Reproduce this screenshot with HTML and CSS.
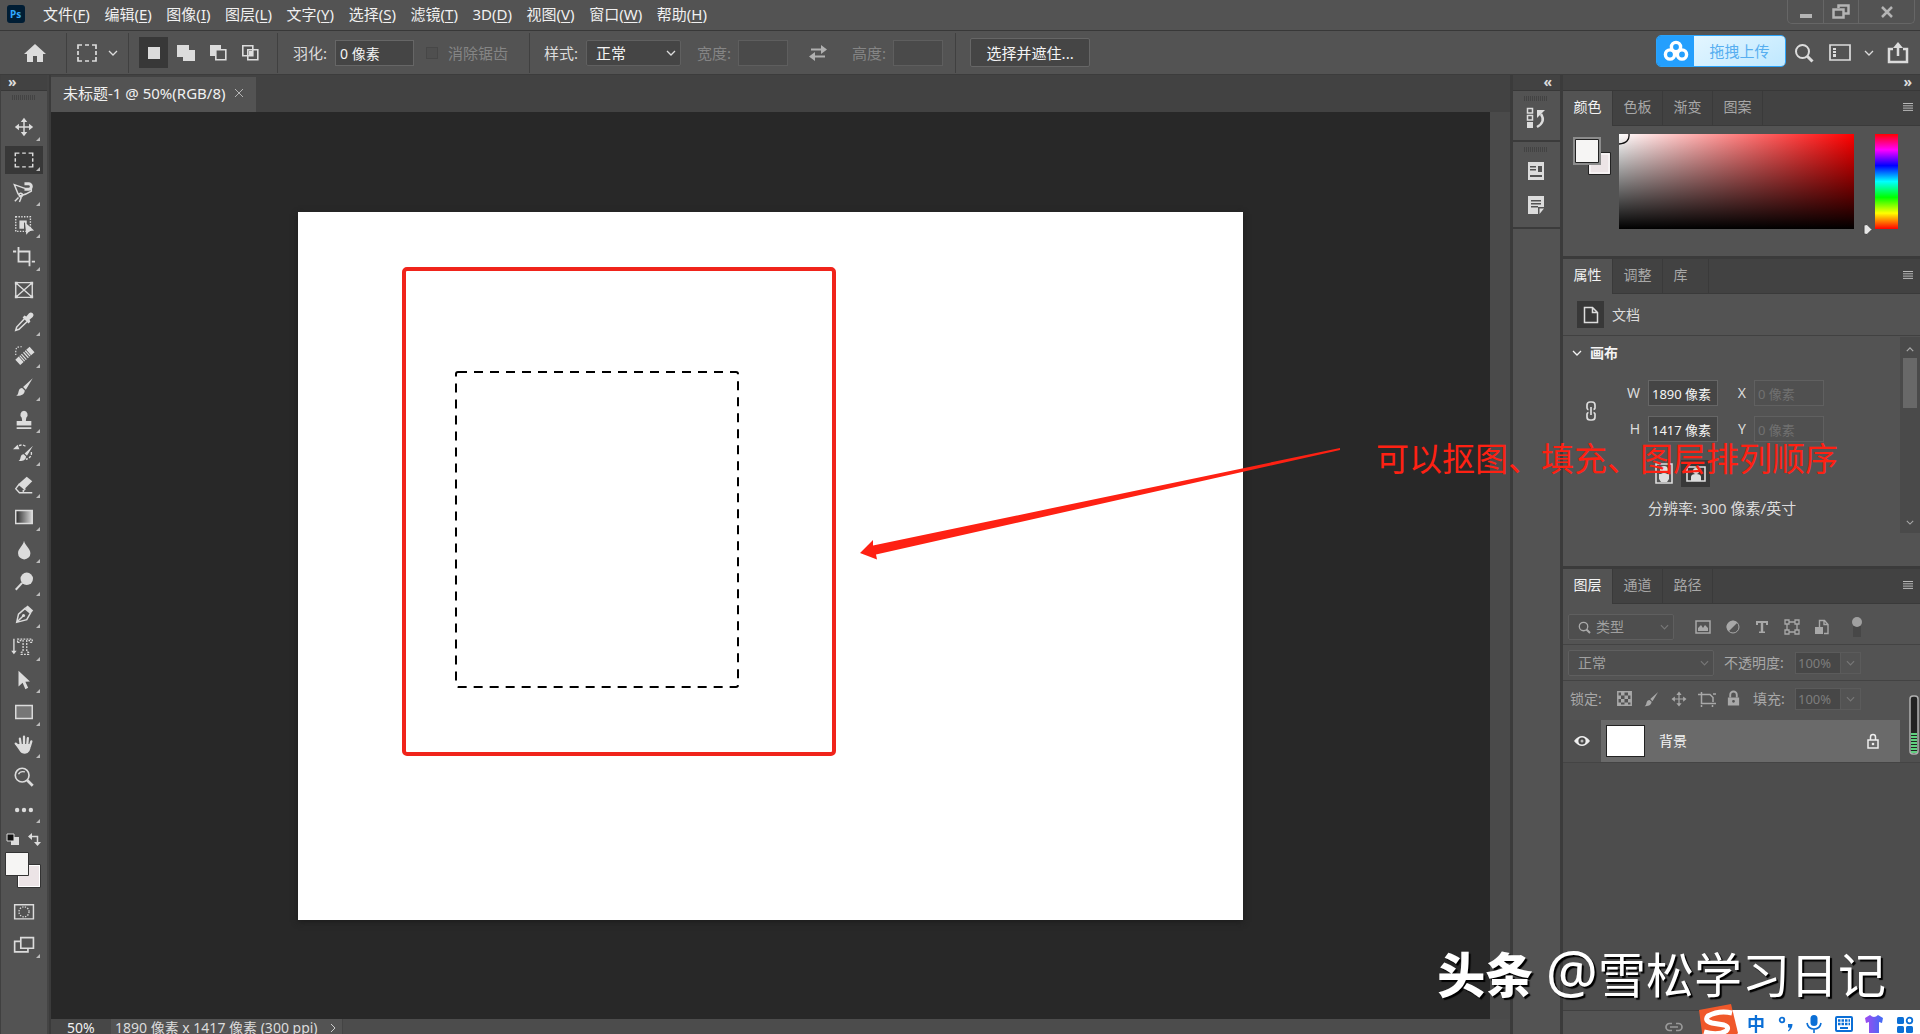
FILE: index.html
```
<!DOCTYPE html>
<html lang="zh-CN">
<head>
<meta charset="utf-8">
<title>未标题-1 @ 50%(RGB/8)</title>
<link rel="stylesheet" href="styles.css">
</head>
<body>
<svg class="defs" aria-hidden="true">
  <defs>
    <linearGradient id="ramp"><stop offset="0" stop-color="#2a2a2a"/><stop offset="1" stop-color="#d8d8d8"/></linearGradient>
    <linearGradient id="shirt"><stop offset="0" stop-color="#a04bf0"/><stop offset="1" stop-color="#3f6df5"/></linearGradient>
    <symbol id="chev" viewBox="0 0 10 6"><path d="M1 1l4 4 4-4" fill="none" stroke="currentColor" stroke-width="1.3"/></symbol>
    <symbol id="search" viewBox="0 0 20 20"><g fill="none" stroke="currentColor"><circle cx="8.500" cy="8.500" r="6.500" stroke-width="2"/><path d="M13 13l5.500 5.500" stroke-width="3"/></g></symbol>
    <symbol id="move" viewBox="0 0 24 24"><path d="M12 5v14M5 12h14" stroke="currentColor" stroke-width="1.600"/><path d="M12 2l3.500 4.500h-7zM12 22l3.500-4.500h-7zM2 12l4.500-3.500v7zM22 12l-4.500-3.500v7z" fill="currentColor"/></symbol>
    <symbol id="brush" viewBox="0 0 24 24"><path d="M21.500 2.500L11 12l3 3zM10 13.200l2.800 2.600c0 4-4 6.200-9.300 5.700 2.500-1.500 2-3 2.800-5.500.7-2 2.200-3 3.700-2.800z" fill="currentColor"/></symbol>
    <symbol id="lock" viewBox="0 0 16 18"><path d="M4.500 8V5a3.500 3.500 0 0 1 7 0v3" fill="none" stroke="currentColor" stroke-width="2"/><path fill-rule="evenodd" d="M2 8h12v8.500H2zM8 10.500a1.500 1.500 0 1 0 0 3 1.500 1.500 0 0 0 0-3z" fill="currentColor"/></symbol>
    <symbol id="menu" viewBox="0 0 10 8"><path d="M0 .5h10M0 2.800h10M0 5.100h10M0 7.400h10" stroke="currentColor"/></symbol>
    <symbol id="chain" viewBox="0 0 12 20"><g fill="none" stroke="currentColor" stroke-width="1.700"><path d="M3.500 8.500H3A2 2 0 0 1 2 7V4a3 3 0 0 1 3-3h2a3 3 0 0 1 3 3v3a2 2 0 0 1-1.500 1.500M3.500 11.500A2 2 0 0 0 2 13v3a3 3 0 0 0 3 3h2a3 3 0 0 0 3-3v-3a2 2 0 0 0-1.500-1.500M6 6v8"/></g></symbol>
  </defs>
</svg>

<div class="app">
  <header class="menubar">
    <svg class="logo" viewBox="0 0 18 18"><rect width="18" height="18" rx="3" fill="#001d34"/><text x="3" y="13" class="logo-text">Ps</text></svg>
    <nav class="menus">
      <a href="#">文件(<u>F</u>)</a><a href="#">编辑(<u>E</u>)</a><a href="#">图像(<u>I</u>)</a><a href="#">图层(<u>L</u>)</a><a href="#">文字(<u>Y</u>)</a><a href="#">选择(<u>S</u>)</a><a href="#">滤镜(<u>T</u>)</a><a href="#">3D(<u>D</u>)</a><a href="#">视图(<u>V</u>)</a><a href="#">窗口(<u>W</u>)</a><a href="#">帮助(<u>H</u>)</a>
    </nav>
    <div class="wincontrols">
      <button aria-label="最小化"><svg width="14" height="14" viewBox="0 0 14 14"><path d="M1 9h12v4H1z" fill="#b4b4b4"/></svg></button>
      <button aria-label="还原"><svg width="18" height="16" viewBox="0 0 18 16"><g fill="none" stroke="#b4b4b4" stroke-width="2.500"><path d="M6.500 4V1.500h10v8H12"/><path d="M1.500 5.500h10v8h-10z"/></g></svg></button>
      <button class="wide" aria-label="关闭"><svg width="14" height="12" viewBox="0 0 14 12"><path d="M2 1l10 10M12 1L2 11" stroke="#b4b4b4" stroke-width="2.500"/></svg></button>
    </div>
  </header>

  <section class="options" aria-label="工具选项">
    <div class="group home">
      <button class="plain" aria-label="主页"><svg width="22" height="20" viewBox="0 0 22 20"><path d="M11 1l11 10h-3v8h-6v-6H9v6H3v-8H0z" fill="#dcdcdc"/></svg></button>
    </div>
    <div class="group preset">
      <button class="plain" aria-label="矩形选框工具"><svg width="20" height="18" viewBox="0 0 20 18"><path d="M1 5V1h4M8 1h4M15 1h4v4M19 7v4M19 13v4h-4M12 17H8M5 17H1v-4M1 11V7" fill="none" stroke="#dcdcdc" stroke-width="1.700"/></svg></button>
      <svg class="chev" width="10" height="6"><use href="#chev"/></svg>
    </div>
    <div class="group modes">
      <button class="mode on" aria-label="新选区"><svg width="18" height="18"><path d="M3 3h12v12H3z" fill="#dcdcdc"/></svg></button>
      <button class="mode" aria-label="添加到选区"><svg width="18" height="18"><path d="M0 1h12v5h6v11H6v-4H0z" fill="#dcdcdc"/></svg></button>
      <button class="mode" aria-label="从选区减去"><svg width="18" height="18"><path d="M1 1h11v4H6v7H1z" fill="#dcdcdc"/><path d="M6.800 5.800h10v10h-10z" fill="none" stroke="#dcdcdc" stroke-width="1.600"/></svg></button>
      <button class="mode" aria-label="与选区交叉"><svg width="18" height="18"><g fill="none" stroke="#dcdcdc" stroke-width="1.600"><path d="M1.800 1.800h10v10h-10zM6.800 5.800h10v10h-10z"/></g><path d="M8 7h4v5H8z" fill="#dcdcdc"/></svg></button>
    </div>
    <div class="group feather">
      <label for="feather">羽化:</label><input id="feather" class="field" value="0 像素">
      <label class="check"><input type="checkbox" disabled>消除锯齿</label>
    </div>
    <div class="group style">
      <label for="style">样式:</label>
      <span class="drop style-drop"><select id="style"><option>正常</option></select><svg width="10" height="6"><use href="#chev"/></svg></span>
      <label for="w" class="dim">宽度:</label><input id="w" class="field small" disabled>
      <button class="plain swap" aria-label="交换"><svg width="18" height="16" viewBox="0 0 18 16"><path d="M2 4.500h11M16 11.500H5" stroke="#b0b0b0" stroke-width="2"/><path d="M12 0l6 4.500-6 4.500zM6 7l-6 4.500L6 16z" fill="#b0b0b0"/></svg></button>
      <label for="h" class="dim">高度:</label><input id="h" class="field small" disabled>
    </div>
    <button class="refine">选择并遮住...</button>
    <div class="rightopts">
      <button class="upload"><span class="cloud"><svg width="26" height="22" viewBox="0 0 26 22"><g fill="none" stroke="#fff" stroke-width="3.400"><circle cx="13" cy="7" r="4.600"/><circle cx="7" cy="14.500" r="4.600"/><circle cx="19" cy="14.500" r="4.600"/></g></svg></span><span class="uptext">拖拽上传</span></button>
      <button class="plain" aria-label="搜索"><svg width="20" height="20"><use href="#search"/></svg></button>
      <button class="plain" aria-label="工作区"><svg width="22" height="18" viewBox="0 0 22 18"><path d="M1 1h20v15H1z" fill="none" stroke="currentColor" stroke-width="1.700"/><path d="M4 4h3v2H4zM4 7h3v2H4zM4 10h3v3H4z" fill="currentColor"/></svg></button>
      <svg class="chev" width="10" height="6"><use href="#chev"/></svg>
      <button class="plain share" aria-label="共享"><svg width="22" height="22" viewBox="0 0 22 22"><path d="M6 7H2v13h18V7h-4M11 14V4" fill="none" stroke="currentColor" stroke-width="2.500"/><path d="M11 0l5 6H6z" fill="currentColor"/></svg></button>
    </div>
  </section>

  <main class="work">
    <aside class="toolbar">
      <div class="colhead">»</div>
      <div class="grip"></div>
      <div class="tools">
        <button aria-label="移动"><svg viewBox="0 0 24 24"><use href="#move"/></svg></button>
        <button class="on" aria-label="矩形选框"><svg viewBox="0 0 24 24"><path d="M2.500 8V4.500H7M10 4.500h4M17 4.500h4.500V8M21.500 10v4M21.500 16v3.500H17M14 19.500h-4M7 19.500H2.500V16M2.500 14v-4" fill="none" stroke="currentColor" stroke-width="1.600"/></svg></button>
        <button aria-label="磁性套索"><svg viewBox="0 0 24 24"><path d="M13 8L1.500 4l4 10 3 3M8 16q6-1 12-5V8M6.500 15.500a2 2 0 1 1 3 1.500q-2 1.500-3-1.500M6 18l-4 4M9 18l-2 5" fill="none" stroke="currentColor" stroke-width="1.600"/><path d="M12.500 3h4.500a3 3 0 0 1 0 6h-4.500" fill="none" stroke="currentColor" stroke-width="3.200"/></svg></button>
        <button aria-label="对象选择"><svg viewBox="0 0 24 24"><path d="M3 3h16v16H3z" fill="none" stroke="currentColor" stroke-width="1.500" stroke-dasharray="1.500 1.500"/><path d="M7 7h8v4l-3-2v7H7z" fill="currentColor"/><path d="M13 9l10 9-5 .5-3.500 4z" fill="currentColor"/></svg></button>
        <button aria-label="裁剪"><svg viewBox="0 0 24 24"><path d="M6 1v16h11M20.500 17H24M0 6h3.500M7 6h11v16" fill="none" stroke="currentColor" stroke-width="2"/></svg></button>
        <button class="nomore" aria-label="图框"><svg viewBox="0 0 24 24"><path d="M3 4h18v16H3zM3 4l18 16M21 4L3 20" fill="none" stroke="currentColor" stroke-width="1.500"/><path d="M2 3h3v3H2zM19 3h3v3h-3zM2 18h3v3H2zM19 18h3v3h-3z" fill="currentColor"/></svg></button>
        <button aria-label="吸管"><svg viewBox="0 0 24 24"><path d="M12.500 8.500L4 17.500 3 21l3.500-1 9-8.500" fill="none" stroke="currentColor" stroke-width="1.700"/><path d="M10.500 7l2-2 2 1 3-3.500a2.700 2.700 0 0 1 4 4L18 9.500l1 2-2 2z" fill="currentColor"/></svg></button>
        <button aria-label="修复画笔"><svg viewBox="0 0 24 24"><path d="M3 12V8q0-5 5-5h3" fill="none" stroke="currentColor" stroke-width="1.300" stroke-dasharray="1.500 1.500"/><g transform="rotate(-42 13 13)"><path d="M2.500 9h5v8h-5zM18.500 9h5v8h-5z" fill="currentColor"/><path d="M9 9v8M11.500 9v8M14.500 9v8M17 9v8" stroke="currentColor" stroke-width="1.400"/></g></svg></button>
        <button aria-label="画笔"><svg viewBox="0 0 24 24"><use href="#brush"/></svg></button>
        <button aria-label="仿制图章"><svg viewBox="0 0 24 24"><path d="M12 2a4.300 4.300 0 0 1 2.500 7.500L14 13h6v5H4v-5h6l-.5-3.500A4.300 4.300 0 0 1 12 2zM4 20h16v1.800H4z" fill="currentColor"/></svg></button>
        <button aria-label="历史记录画笔"><svg viewBox="0 0 24 24"><path d="M3 8q5-6 11-2M20 12q1 6-6 8" fill="none" stroke="currentColor" stroke-width="1.500" stroke-dasharray="3 1.500"/><path d="M0 9l5-5 2 5z" fill="currentColor"/><use href="#brush" x="3" y="3" width="21" height="21"/></svg></button>
        <button aria-label="橡皮擦"><svg viewBox="0 0 24 24"><path d="M15 3l6 5-9 9-6-6z" fill="currentColor"/><path d="M6.500 11.500L3 16l4 4.500h5l-1-2 2-2zM9 20.500h12" fill="none" stroke="currentColor" stroke-width="1.500"/></svg></button>
        <button aria-label="渐变"><svg viewBox="0 0 24 24"><path d="M3 5h18v14H3z" fill="url(#ramp)" stroke="currentColor" stroke-width="1.600"/></svg></button>
        <button aria-label="模糊"><svg viewBox="0 0 24 24"><path d="M12 2c1 5 7 8.500 7 13.500a6.700 6.700 0 0 1-13.500 0C5.500 10.500 11 8 12 2z" fill="currentColor"/></svg></button>
        <button aria-label="减淡"><svg viewBox="0 0 24 24"><circle cx="15" cy="8.500" r="6.800" fill="currentColor"/><path d="M10 13l-7 7.500" stroke="currentColor" stroke-width="2.200"/></svg></button>
        <button aria-label="钢笔"><svg viewBox="0 0 24 24"><path d="M4 20l2-9 7-6 6 5-4 7zM4 20l7-7" fill="none" stroke="currentColor" stroke-width="1.600"/><circle cx="11.500" cy="12.500" r="1.700" fill="currentColor"/><path d="M13 4l3-2.500L22 7l-2.500 3z" fill="currentColor"/></svg></button>
        <button aria-label="直排文字蒙版"><svg viewBox="0 0 24 24"><path d="M1 3v15" stroke="currentColor" stroke-width="1.500"/><path d="M-2 16h6l-3 4z" fill="currentColor"/><path d="M5 7V3.500h16V7h-2l-1-2h-3v12l2 1v2H9v-2l2-1V5H8L7 7z" fill="none" stroke="currentColor" stroke-width="1.400" stroke-dasharray="2 1.300"/></svg></button>
        <button aria-label="路径选择"><svg viewBox="0 0 24 24"><path d="M6 2l12.500 11.500-5 .5 3 6.500-3 1.500-3-7L6 19z" fill="currentColor"/></svg></button>
        <button aria-label="矩形"><svg viewBox="0 0 24 24"><path d="M3 5h18v14H3z" fill="#777" stroke="currentColor" stroke-width="1.600"/></svg></button>
        <button aria-label="抓手"><svg viewBox="0 0 24 24"><path d="M7 14L3 10.500M8.500 12L7.500 5M12 11.500V3M15.500 12l.7-7.500M18.500 13l1.500-5" fill="none" stroke="currentColor" stroke-width="2.500" stroke-linecap="round"/><path d="M7 11h12.500q0 10.500-6.500 10.500-4 0-6-3.500l-4.500-6.500z" fill="currentColor"/></svg></button>
        <button class="nomore" aria-label="缩放"><svg viewBox="0 0 24 24"><circle cx="10" cy="10" r="7.500" fill="none" stroke="currentColor" stroke-width="1.800"/><path d="M6 9q2-4 7-2.500" fill="none" stroke="currentColor" stroke-width="1.500"/><path d="M15.500 15.500l6 6" stroke="currentColor" stroke-width="3"/></svg></button>
        <button aria-label="编辑工具栏"><svg viewBox="0 0 24 24"><g fill="currentColor"><circle cx="4.500" cy="12" r="2.400"/><circle cx="12" cy="12" r="2.400"/><circle cx="19.500" cy="12" r="2.400"/></g></svg></button>
      </div>
      <div class="minis">
        <svg width="13" height="13"><path d="M5 4h8v8H5z" fill="#dcdcdc"/><path d="M1 1h7v7H1z" fill="#111" stroke="#dcdcdc"/></svg>
        <svg width="13" height="13" viewBox="0 0 13 13"><path d="M3 3.500h6.500V10" fill="none" stroke="#dcdcdc" stroke-width="1.500"/><path d="M0 3.500L4 0v7zM6 9h7l-3.500 4z" fill="#dcdcdc"/></svg>
      </div>
      <svg class="toolsw" width="36" height="37"><path d="M12.500 12.500h23v23h-23z" fill="#fff" stroke="#333"/><path d="M14 14h20v20H14z" fill="#ece4e6"/><path d="M.5.5h23v23H.5z" fill="#f6f5f4" stroke="#333"/></svg>
      <div class="extras">
        <button class="nomore" aria-label="快速蒙版"><svg viewBox="0 0 24 24"><path d="M1.800 4h20.500v15.500H1.800z" fill="none" stroke="currentColor" stroke-width="1.600"/><circle cx="12" cy="11.800" r="5.500" fill="none" stroke="currentColor" stroke-width="1.400" stroke-dasharray="1.500 1.400"/></svg></button>
        <button aria-label="屏幕模式"><svg viewBox="0 0 24 24"><path d="M8.500 4h13.800v11.500H8.500z" fill="none" stroke="currentColor" stroke-width="1.800"/><path d="M8 8H1.800v11.500h14.500V16" fill="none" stroke="currentColor" stroke-width="1.800"/></svg></button>
      </div>
    </aside>

    <section class="document">
      <div class="doctabs"><div class="doctab"><span>未标题-1 @ 50%(RGB/8)</span><button class="plain" aria-label="关闭"><svg width="10" height="10"><path d="M1 1l8 8M9 1L1 9" stroke="#b4b4b4"/></svg></button></div></div>
      <div class="stage">
        <div class="artboard">
          <svg class="marks" viewBox="0 0 945 708" aria-hidden="true">
            <rect x="106" y="57" width="430" height="485" rx="3" fill="none" stroke="#f0241b" stroke-width="4"/>
            <rect x="158" y="160" width="282" height="315" rx="2" fill="none" stroke="#000" stroke-width="2" stroke-dasharray="9 7"/>
            <path d="M562 341l13-13v5.500L1042 236v2L578 342.500l1 5z" fill="#fe2113"/>
          </svg>
          <p class="note">可以抠图、填充、图层排列顺序</p>
        </div>
      </div>
      <div class="vscroll"></div>
      <footer class="status"><span class="zoom">50%</span><span class="info">1890 像素 x 1417 像素 (300 ppi)<svg width="6" height="10"><path d="M1 1l4 4-4 4" fill="none" stroke="#ccc"/></svg></span></footer>
    </section>

    <aside class="dock">
      <div class="colhead end">«</div>
      <div class="dockset"><div class="grip"></div>
        <button aria-label="历史记录"><svg width="20" height="22" viewBox="0 0 20 22"><path d="M1.500 1.500h5v4.500h-5zM1.500 8.500h5V13h-5z" fill="none" stroke="currentColor" stroke-width="1.500"/><path d="M1 15h6v6H1z" fill="currentColor"/><path d="M11 20q9-5 4-13" fill="none" stroke="currentColor" stroke-width="2.500"/><path d="M11 11V3h8z" fill="currentColor"/></svg></button></div>
      <div class="dockset two"><div class="grip"></div>
        <button aria-label="属性"><svg width="18" height="20"><path fill-rule="evenodd" d="M1 1h16v18H1zM3 5h6v1.500H3zM3 8h6v1.500H3zM11 5h4v6h-4zM3 14h12v2H3z" fill="currentColor"/></svg></button>
        <button aria-label="注释"><svg width="18" height="20"><path fill-rule="evenodd" d="M1 1h16v11h-6v7H1zM4 5h10v1.500H4zM4 8h10v1.500H4zM4 11h7v1.500H4zM12.500 13.500H17L12.500 19z" fill="currentColor"/></svg></button></div>
      <div class="dockrest"></div>
    </aside>

    <aside class="panels">
      <div class="colhead end">»</div>
      <section class="panel color">
        <div class="tabs"><button class="tab on">颜色</button><button class="tab">色板</button><button class="tab">渐变</button><button class="tab">图案</button><svg class="pm" width="10" height="8"><use href="#menu"/></svg></div>
        <div class="picker">
          <svg width="40" height="40"><path d="M15.500 15.500h22v22h-22z" fill="#ece4e6" stroke="#222"/><path d="M17 17h19v19H17z" fill="none" stroke="#fff"/><path d="M0 0h28v28H0z" fill="#8c8c8c"/><path d="M2.500 2.500h23v23h-23z" fill="#f6f5f4" stroke="#222"/></svg>
          <div class="field2d"><svg width="11" height="11"><path d="M10 0q1 9-10 10" fill="none" stroke="#111" stroke-width="1.300"/></svg></div>
          <svg class="huearrow" width="10" height="11"><path d="M1 1l3-.5 5 5-5 5-3-.5z" fill="#e6e6e6" stroke="#444"/></svg>
          <div class="hue"></div>
        </div>
      </section>

      <section class="panel props">
        <div class="tabs"><button class="tab on">属性</button><button class="tab">调整</button><button class="tab short">库</button><svg class="pm" width="10" height="8"><use href="#menu"/></svg></div>
        <div class="dochead"><span class="docicon"><svg width="16" height="18"><path d="M1.500 1.500h8l5 5v10h-13zM9.500 1.500v5h5" fill="none" stroke="#ddd" stroke-width="1.500"/></svg></span>文档</div>
        <div class="propwrap">
          <div class="propbody">
            <h2><svg width="10" height="6"><use href="#chev"/></svg>画布</h2>
            <div class="size">
              <svg class="link" width="12" height="20"><use href="#chain"/></svg>
              <label for="cw">W</label><input id="cw" class="field" value="1890 像素">
              <label for="cx">X</label><input id="cx" class="field" value="0 像素" disabled>
              <label for="ch">H</label><input id="ch" class="field" value="1417 像素">
              <label for="cy">Y</label><input id="cy" class="field" value="0 像素" disabled>
            </div>
            <div class="orient">
              <button aria-label="纵向"><svg width="18" height="21"><path d="M1 1h16v19H1z" fill="none" stroke="#ddd" stroke-width="1.600"/><circle cx="9" cy="7" r="4" fill="#ddd"/><path d="M4 11h10v5l-2 3H6l-2-3z" fill="#ddd"/></svg></button>
              <button class="on" aria-label="横向"><svg width="20" height="16"><path d="M1 1h18v14H1z" fill="none" stroke="#ddd" stroke-width="1.600"/><circle cx="10" cy="5" r="3" fill="#ddd"/><path d="M5 15v-4q0-3 5-3t5 3v4z" fill="#ddd"/></svg></button>
            </div>
            <p class="res">分辨率: 300 像素/英寸</p>
          </div>
          <div class="pscroll"><svg class="up" width="8" height="5" viewBox="0 0 10 6"><path d="M1 5l4-4 4 4" fill="none" stroke="#aaa" stroke-width="1.500"/></svg><span class="thumb"></span><svg class="down" width="8" height="5"><use href="#chev"/></svg></div>
        </div>
      </section>

      <section class="panel layers">
        <div class="tabs"><button class="tab on">图层</button><button class="tab">通道</button><button class="tab">路径</button><svg class="pm" width="10" height="8"><use href="#menu"/></svg></div>
        <div class="lrow filter">
          <span class="drop kind"><svg class="mag" width="13" height="13"><use href="#search"/></svg><select aria-label="类型" disabled><option>类型</option></select><svg width="9" height="6"><use href="#chev"/></svg></span>
          <div class="ficons">
            <svg width="16" height="14"><path d="M1 1h14v12H1z" fill="none" stroke="currentColor" stroke-width="1.500"/><path d="M3 11V8l3-3 2 3 2-3 3 3v3z" fill="currentColor"/></svg>
            <svg width="14" height="14"><circle cx="7" cy="7" r="6" fill="none" stroke="currentColor"/><path d="M11.500 2.500A6.300 6.300 0 0 0 2.500 11.500z" fill="currentColor"/></svg>
            <svg width="14" height="14"><path d="M1 1h12v4h-2V3H8.200v8.500H10V13H4v-1.500h1.800V3H3v2H1z" fill="currentColor"/></svg>
            <svg width="16" height="16"><path d="M3 3h10v10H3z" fill="none" stroke="currentColor" stroke-width="1.300"/><path d="M1 1h4v4H1zM11 1h4v4h-4zM1 11h4v4H1zM11 11h4v4h-4z" fill="#535353" stroke="currentColor" stroke-width="1.300"/></svg>
            <svg width="14" height="16"><path d="M4.500 8V1.500h5l3.500 4v9H9M9 1.500v4h4" fill="none" stroke="currentColor" stroke-width="1.400"/><path d="M0 8h8v7H0z" fill="currentColor"/></svg>
          </div>
          <svg class="toggle" width="12" height="22"><path d="M2 10h8v11H2z" fill="#474747"/><circle cx="6" cy="6" r="5" fill="#a0a0a0"/></svg>
        </div>
        <div class="lrow blend">
          <span class="drop mix"><select aria-label="混合模式" disabled><option>正常</option></select><svg width="9" height="6"><use href="#chev"/></svg></span>
          <label for="op">不透明度:</label><span class="pct"><input id="op" value="100%" disabled><button disabled aria-label="不透明度滑块"><svg width="9" height="6"><use href="#chev"/></svg></button></span>
        </div>
        <div class="lrow locks">
          <span class="locklabel">锁定:</span>
          <div class="licons">
            <svg width="15" height="15"><path d="M.8.800h13.400v13.400H.8z" fill="none" stroke="currentColor" stroke-width="1.500"/><path d="M4 1h3.500v3.500H4zM11 1h3v3.500h-3zM1 4.500h3V8H1zM7.500 4.500H11V8H7.500zM4 8h3.500v3.500H4zM11 8h3v3.500h-3zM1 11.500h3V14H1zM7.500 11.500H11V14H7.500z" fill="currentColor"/></svg>
            <svg width="18" height="18"><use href="#brush"/></svg>
            <svg width="18" height="18"><use href="#move"/></svg>
            <svg width="18" height="16"><path d="M0 3.500h12l3 3V11M3.500 1v11.500H18M3.500 14v2M14.500 14v2M15 3h3" fill="none" stroke="currentColor" stroke-width="1.500"/></svg>
            <svg width="15" height="17"><use href="#lock"/></svg>
          </div>
          <label for="fill">填充:</label><span class="pct"><input id="fill" value="100%" disabled><button disabled aria-label="填充滑块"><svg width="9" height="6"><use href="#chev"/></svg></button></span>
        </div>
        <div class="list">
          <div class="layer">
            <button class="eye" aria-label="可见性"><svg width="16" height="12"><path d="M0 6q8-10 16 0-8 10-16 0z" fill="#eee"/><circle cx="8" cy="6" r="3.600" fill="#484848"/><circle cx="8" cy="6" r="1.500" fill="#bbb"/></svg></button>
            <div class="layerbody"><span class="layerthumb"></span><span>背景</span><svg width="14" height="16" viewBox="0 0 14 16"><path d="M2 7h10v8H2zM4.500 7V4a2.500 2.500 0 0 1 5 0v3" fill="none" stroke="#eee" stroke-width="1.500"/><circle cx="7" cy="11" r="1.300" fill="#eee"/></svg></div>
          </div>
        </div>
        <div class="lfoot"><svg width="18" height="10" viewBox="0 0 18 10"><path d="M7 1.500H4.500a3.500 3.500 0 0 0 0 7H7M11 1.500h2.500a3.500 3.500 0 0 1 0 7H11M5 5h8" fill="none" stroke="#999" stroke-width="1.700"/></svg></div>
      </section>
    </aside>
  </main>
</div>

<svg class="meter" width="10" height="60"><rect x="1" y="1" width="8" height="58" rx="3" fill="#222" stroke="#b0b0b0" stroke-width="1.500"/><path d="M5 38v20" stroke="#5fd07f" stroke-width="6" stroke-dasharray="2 1"/></svg>
<p class="watermark"><b>头条</b> <span class="at">@</span>雪松学习日记</p>
<div class="ime">
  <svg class="sogou" width="40" height="36" viewBox="0 0 40 36"><path d="M0 6L32 0l7 29-6 7H4z" fill="#f0582a"/><path d="M33 9Q20 6 9 12q-4 5 4 7l12 2q6 2 2 6-8 5-22 1" fill="none" stroke="#fff" stroke-width="5"/></svg>
  <span class="zh">中</span>
  <svg width="16" height="16"><circle cx="4" cy="4" r="2.300" fill="none" stroke="#0b6fd6" stroke-width="1.800"/><path d="M10 8h4.500q0 5-4 7.500l-.5-1q2-1.500 1.500-3H10z" fill="#0b6fd6"/></svg>
  <svg width="16" height="20"><rect x="4.500" y="1" width="7" height="11" rx="3.500" fill="#0b6fd6"/><path d="M1 9q1 6 7 6t7-6M8 15v4" fill="none" stroke="#0b6fd6" stroke-width="1.600"/></svg>
  <svg width="18" height="16"><rect x="1" y="1" width="16" height="14" rx="1" fill="none" stroke="#0b6fd6" stroke-width="2"/><path d="M3 4.500h12M3 8h12" stroke="#0b6fd6" stroke-width="2.500" stroke-dasharray="2.500 1"/><path d="M5 12h8" stroke="#0b6fd6" stroke-width="2"/></svg>
  <svg width="18" height="18"><path d="M0 3l5-3q4 4 8 0l5 3-1 5-3-1v11H4V7L1 8z" fill="url(#shirt)"/></svg>
  <svg width="18" height="18"><g fill="#0b6fd6"><rect x="1" y="2" width="7" height="7" rx="1.500"/><rect x="1" y="11" width="7" height="7" rx="1.500"/><rect x="10" y="11" width="7" height="7" rx="1.500"/></g><circle cx="13.500" cy="5.500" r="2.800" fill="none" stroke="#0b6fd6" stroke-width="1.800"/></svg>
</div>
</body>
</html>
```
FILE: styles.css
```
* { box-sizing: border-box; }
html, body { height: 100%; }
body {
  margin: 0;
  overflow: hidden;
  background: #535353;
  color: #dcdcdc;
  font: 15px/20px "Noto Sans", "Noto Sans CJK SC", sans-serif;
}
svg { display: block; flex: none; }
p, h2 { margin: 0; }
button, input, select { font: inherit; color: inherit; margin: 0; }
button { padding: 0; border: 0; background: none; display: flex; align-items: center; justify-content: center; }
select { appearance: none; border: 0; background: none; outline: 0; opacity: 1; }
.defs { position: absolute; width: 0; height: 0; }
.app { height: 100vh; display: flex; flex-direction: column; }

/* menu bar */
.menubar { flex: none; height: 31px; display: flex; align-items: center; justify-content: space-between; padding: 0 0 2px 7px; border-bottom: 1px solid #383838; }
.logo { width: 18px; height: 18px; }
.logo-text { font-size: 10px; font-weight: 700; fill: #31a8ff; }
.menus { display: flex; justify-content: space-between; width: 664px; margin: 0 auto 0 18px; }
.menus a { color: #f0f0f0; text-decoration: none; white-space: nowrap; }
.menus u { text-underline-offset: 2px; }
.wincontrols { align-self: flex-start; display: flex; height: 24px; margin-right: 5px; border: 1px solid #666; border-top: 0; border-radius: 0 0 5px 5px; }
.wincontrols button { width: 35px; }
.wincontrols button + button { border-left: 1px solid #666; }
.wincontrols .wide { width: 56px; }

/* options bar */
.options { flex: none; height: 44px; display: flex; align-items: center; border-bottom: 1px solid #3c3c3c; white-space: nowrap; }
.group { height: 40px; display: flex; align-items: center; border-right: 1px solid #404040; }
.home { padding: 0 20px 0 24px; }
.preset { padding: 0 10px; gap: 11px; }
.modes { padding: 0 13px 0 10px; gap: 3px; }
.mode { width: 29px; height: 31px; }
.mode.on { background: #383838; }
.feather { padding: 0 21px 0 15px; }
.field { background: #454545; border: 1px solid #666; padding: 0 4px; color: #f4f4f4; font-size: 14px; height: 26px; width: 79px; outline: 0; }
.feather .field { margin-left: 8px; }
.check { display: flex; align-items: center; gap: 10px; margin-left: 12px; color: #858585; }
.check input { appearance: none; width: 12px; height: 12px; border: 1px solid #474747; background: #4f4f4f; }
.style { padding: 0 12px 0 14px; }
.drop { display: flex; align-items: center; border: 1px solid #606060; background: #454545; height: 26px; padding-right: 4px; border-radius: 2px; }
.drop select { flex: 1; min-width: 0; height: 100%; padding: 0 9px; color: #f4f4f4; }
.style-drop { width: 95px; margin: 0 16px 0 8px; }
.dim { color: #858585; }
.field.small { width: 50px; margin-left: 7px; background: #4a4a4a; border-color: #5e5e5e; }
.swap { margin: 0 25px 0 21px; }
.refine { width: 120px; height: 29px; margin-left: 14px; background: #454545; border: 1px solid #666; border-radius: 2px; color: #f4f4f4; }
.rightopts { margin-left: auto; display: flex; align-items: center; padding-right: 11px; }
.upload { width: 130px; height: 32px; margin: 0 8px 4px 0; border-radius: 5px; overflow: hidden; border: 1px solid #2ba4fb; }
.cloud { width: 37px; height: 100%; display: grid; place-items: center; background: #249ffd; }
.uptext { flex: 1; line-height: 32px; color: #56aef0; background: linear-gradient(150deg, #e4f6ff, #bfe8ff); }
.rightopts .plain + .plain { margin-left: 15px; }
.rightopts .chev { margin: 0 13px; }

/* work area */
.work { flex: 1; min-height: 0; display: flex; background: #3b3b3b; }
.colhead { flex: none; height: 16px; padding-left: 7px; background: #424242; font-size: 14px; font-weight: 700; line-height: 14px; border-bottom: 1px solid #383838; }
.colhead.end { text-align: right; padding: 0 8px 0 0; }
.grip { width: 24px; height: 5px; background: repeating-linear-gradient(90deg, #434343 0 1px, #535353 1px 2px); }
.toolbar { flex: none; width: 49px; border-left: 1px solid #404040; border-right: 2px solid #444; background: #535353; }
.toolbar .grip { margin: 4px 0 0 11px; }
.tools { display: grid; grid-auto-rows: 1fr; height: 715px; margin: 11px 4px 0; }
.tools button, .extras button { position: relative; width: 38px; color: #dcdcdc; }
.tools button > svg, .extras button > svg { width: 22px; height: 22px; overflow: visible; }
.tools .on { background: #383838; margin: 2px 0; }
.tools button::after, .extras button::after { content: ""; position: absolute; right: 3px; bottom: 3px; border: 2px solid; border-color: transparent #bbb #bbb transparent; }
.tools .nomore::after, .extras .nomore::after { display: none; }
.minis { display: flex; justify-content: space-between; padding: 7px 6px 6px 5px; }
.toolsw { margin-left: 4px; }
.extras { margin: 6px 4px 0; }
.extras button { height: 33px; }

.document { flex: 1; min-width: 0; margin-left: 2px; position: relative; z-index: 2; display: grid; grid-template: 37px 1fr 15px / 1fr 20px; }
.doctabs { grid-column: 1 / 3; background: #424242; padding-top: 2px; }
.doctab { display: inline-flex; align-items: center; height: 35px; padding: 0 12px 3px; gap: 9px; background: #535353; color: #f0f0f0; white-space: nowrap; }
.stage { background: #282828; min-width: 0; display: flex; align-items: center; justify-content: center; }
.vscroll { background: #4a4a4a; }
.artboard { flex: none; position: relative; width: 945px; height: 708px; background: #fff; box-shadow: 0 2px 6px #1c1c1c; }
.marks { position: absolute; inset: 0; width: 100%; height: 100%; overflow: visible; }
.note { position: absolute; left: 1078px; top: 223px; font-size: 33px; line-height: 48px; color: #fe2113; white-space: nowrap; }
.status { grid-column: 1 / 3; display: flex; background: #4c4c4c; overflow: hidden; font-size: 14px; line-height: 18px; }
.zoom { width: 60px; padding-left: 16px; background: #474747; color: #f0f0f0; }
.info { display: flex; align-items: center; gap: 12px; height: 18px; padding: 0 6px 0 4px; background: #535353; border-right: 1px solid #444; }

.dock { flex: none; width: 50px; margin-left: 3px; border-right: 3px solid #3b3b3b; display: flex; flex-direction: column; }
.dockset { background: #535353; padding: 5px 0; margin-bottom: 2px; }
.dockset .grip { margin-left: 11px; }
.dockset button { width: 100%; height: 34px; padding-right: 2px; }
.two .grip { margin-bottom: 2px; }
.dockrest { flex: 1; background: #535353; }

/* panels */
.panels { flex: none; width: 357px; display: flex; flex-direction: column; font-size: 14px; }
.panel { flex: none; background: #535353; margin-bottom: 3px; }
.tabs { display: flex; height: 35px; background: #424242; border-bottom: 1px solid #3a3a3a; }
.tab { width: 50px; height: 35px; padding-bottom: 3px; color: #a8a8a8; border-right: 1px solid #3a3a3a; }
.tab.on { background: #535353; color: #f4f4f4; }
.tab.short { width: 46px; padding-right: 10px; }
.pm { margin: 12px 7px 0 auto; color: #b8b8b8; }
.picker { display: flex; height: 130px; padding: 8px 22px 27px 10px; }
.picker > svg:first-child { margin: 3px 6px 0 0; }
.field2d { flex: 1; background: linear-gradient(transparent, #000), linear-gradient(90deg, #fff, #f00); }
.huearrow { margin: 90px 2px 0 9px; }
.hue { width: 23px; background: linear-gradient(#f00, #f0f, #00f, #0ff, #0f0, #ff0, #f00); }
.dochead { display: flex; align-items: center; gap: 8px; height: 42px; padding-left: 14px; border-bottom: 1px solid #414141; }
.docicon { width: 27px; height: 27px; background: #383838; display: grid; place-items: center; }
.propwrap { display: flex; height: 196px; margin: 1px 0 33px; }
.propbody { flex: 1; }
.propbody h2 { display: flex; align-items: center; gap: 8px; padding: 6px 0 0 9px; font-size: 14px; font-weight: 700; line-height: 20px; color: #f4f4f4; }
.size { display: grid; grid-template-columns: 12px 35px 70px 20px 70px; column-gap: 8px; row-gap: 10px; padding: 17px 0 0 22px; align-items: center; }
.size .link { grid-row: 1 / 3; }
.size label { text-align: right; }
.size .field { width: 70px; font-size: 13px; padding: 0 3px; }
.size .field:disabled { background: #505050; border-color: #606060; color: #707070; }
.orient { display: flex; gap: 4px; padding: 18px 0 0 88px; }
.orient button { width: 26px; height: 27px; }
.orient .on { width: 29px; background: #383838; }
.res { padding: 11px 0 0 85px; font-size: 15px; }
.pscroll { width: 20px; background: #4a4a4a; display: flex; flex-direction: column; align-items: center; padding: 10px 0 8px; }
.thumb { width: 14px; height: 50px; margin-top: 6px; background: #686868; }
.down { margin-top: auto; color: #aaa; }

.layers { flex: 1; min-height: 0; display: flex; flex-direction: column; margin: 0; }
.layers .tabs { flex: none; }
.lrow { flex: none; display: flex; align-items: center; height: 36px; color: #a8a8a8; padding-left: 5px; }
.filter { height: 41px; padding-top: 6px; border-bottom: 1px solid #434343; }
.layers .drop { background: #4e4e4e; border-color: #5f5f5f; color: #777; }
.layers .drop select { color: #a0a0a0; }
.kind { width: 106px; padding-left: 9px; }
.layers .kind select { padding: 0 5px; }
.mag { color: #aaa; }
.ficons { display: flex; gap: 15px; align-items: center; margin-left: 21px; }
.toggle { margin-left: 22px; }
.mix { width: 146px; margin-right: 10px; }
.blend { border-bottom: 1px solid #434343; }
.blend label { width: 71px; }
.pct { display: flex; height: 22px; border: 1px solid #5b5b5b; }
.pct input { width: 44px; border: 0; padding: 0 2px; font-size: 13px; background: #474747; color: #7d7d7d; }
.pct button { width: 20px; border-left: 1px solid #5b5b5b; color: #777; }
.locks { height: 39px; padding: 0 0 4px 7px; }
.locklabel { width: 47px; }
.licons { display: flex; align-items: center; gap: 10px; width: 136px; }
.locks label { width: 42px; }
.list { flex: 1; background: #4d4d4d; }
.layer { display: flex; height: 43px; padding-right: 20px; border-bottom: 1px solid #444; background: #505050; }
.eye { width: 38px; }
.layerbody { flex: 1; display: flex; align-items: center; gap: 14px; padding: 0 20px 0 5px; background: #6a6a6a; color: #f4f4f4; }
.layerbody svg { margin-left: auto; }
.layerthumb { width: 39px; height: 32px; background: #fff; border: 1px solid #222; }
.lfoot { flex: none; height: 24px; padding: 11px 0 0 102px; border-top: 1px solid #404040; }

/* floating overlays */
.meter { position: fixed; right: 1px; top: 695px; z-index: 4; }
.watermark { position: fixed; right: 34px; bottom: 24px; z-index: 4; font-size: 48px; line-height: 70px; color: #fff; text-shadow: 2px 2px 1px #000; white-space: nowrap; }
.watermark b { font-weight: 900; }
.at { font-size: 58px; line-height: 48px; }
.ime { position: fixed; right: 0; bottom: 0; z-index: 3; width: 218px; height: 24px; display: flex; align-items: center; justify-content: space-between; padding: 4px 6px 0 45px; background: #fff; color: #0b6fd6; }
.zh { font-size: 18px; font-weight: 700; line-height: 16px; }
.sogou { position: absolute; left: -3px; bottom: -6px; }
```
